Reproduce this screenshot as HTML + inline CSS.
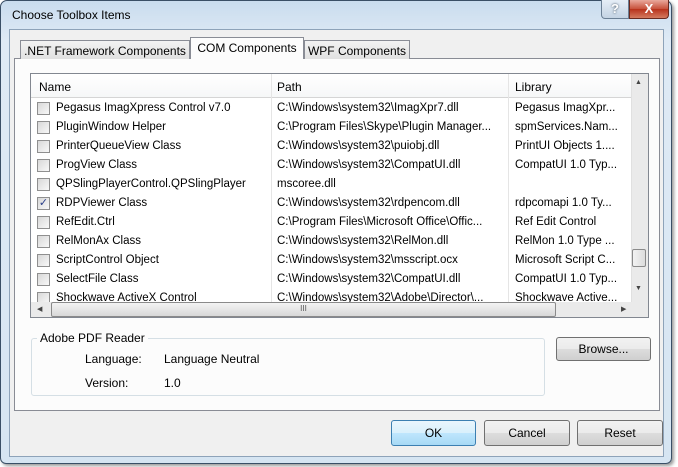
<!DOCTYPE html>
<html><head><style>
*{box-sizing:border-box;margin:0;padding:0}
body{width:678px;height:467px;overflow:hidden;font-family:"Liberation Sans",sans-serif;font-size:11.5px;color:#000;position:relative;background:#fff}
.abs{position:absolute}
#frame{left:0;top:0;width:672px;height:464px;border:1px solid #3a4f66;border-radius:7px 7px 6px 6px;background:linear-gradient(180deg,#c9dcee 0,#dfeaf5 40px,#d6e5f2 100%);box-shadow:2px 2px 3px rgba(0,0,0,.4)}
#client{left:9px;top:29px;width:655px;height:428px;background:#f0f0f0;border:1px solid #8ea3b9}
.btnc{border:1px solid #707070;border-radius:3px;background:linear-gradient(#f2f2f2 0,#ebebeb 50%,#dddddd 51%,#cfcfcf 100%);text-align:center;font-size:12px}
.tab{border:1px solid #898c95;border-bottom:none;background:linear-gradient(#f3f3f3,#e1e1e1);font-size:12px;text-align:center;line-height:17px}
.row{position:absolute;left:0;height:19px;width:598px;line-height:19px;white-space:nowrap}
.row span{position:absolute;overflow:hidden}
.cb{position:absolute;left:6px;top:3px;width:13px;height:13px;border:1px solid #8f8f8f;background:linear-gradient(135deg,#d8d8d8,#f8f8f8)}
</style></head><body>
<div id="frame" class="abs"></div>
<div class="abs" style="left:12px;top:8px;font-size:12px">Choose Toolbox Items</div>
<div class="abs" style="left:601px;top:0;width:28px;height:19px;border:1px solid #6b7f95;border-top:none;border-radius:0 0 0 4px;background:linear-gradient(#e6eef7,#c4d3e3);text-align:center;color:#fff;font-weight:bold;font-size:13px;line-height:17px;text-shadow:0 0 2px #345">?</div>
<div class="abs" style="left:629px;top:0;width:40px;height:19px;border:1px solid #6a2a20;border-top:none;border-radius:0 0 4px 0;background:linear-gradient(#e9a99c,#c7503a 50%,#b8321c 51%,#d47a5f);text-align:center;color:#fff;font-weight:bold;font-size:13px;line-height:17px">X</div>
<div id="client" class="abs"></div>
<div class="abs" style="left:14px;top:58px;width:646px;height:353px;border:1px solid #898c95;background:#fcfcfc"></div>
<div class="abs tab" style="left:20px;top:40px;width:170px;height:19px;line-height:20px">.NET Framework Components</div>
<div class="abs tab" style="left:190px;top:37px;width:114px;height:22px;background:#fcfcfc;line-height:20px">COM Components</div>
<div class="abs tab" style="left:304px;top:40px;width:106px;height:19px;line-height:20px">WPF Components</div>
<div class="abs" style="left:30px;top:73px;width:619px;height:245px;border:1px solid #828790;background:#fff;overflow:hidden">
 <div class="abs" style="left:0;top:0;width:600px;height:24px;background:linear-gradient(#fff,#f6f7f8);border-bottom:1px solid #d5d5d5"></div>
 <div class="abs" style="left:8px;top:6px;font-size:12px">Name</div>
 <div class="abs" style="left:240px;top:0;width:1px;height:228px;background:#e5e5e5"></div>
 <div class="abs" style="left:246px;top:6px;font-size:12px">Path</div>
 <div class="abs" style="left:477px;top:0;width:1px;height:228px;background:#e5e5e5"></div>
 <div class="abs" style="left:484px;top:6px;font-size:12px">Library</div>
 <div class="abs" style="left:0;top:25px;width:600px;height:203px;overflow:hidden">
  <div class="row" style="top:0"><i class="cb"></i><span style="left:25px">Pegasus ImagXpress Control v7.0</span><span style="left:246px">C:\Windows\system32\ImagXpr7.dll</span><span style="left:484px">Pegasus ImagXpr...</span></div>
  <div class="row" style="top:19px"><i class="cb"></i><span style="left:25px">PluginWindow Helper</span><span style="left:246px">C:\Program Files\Skype\Plugin Manager...</span><span style="left:484px">spmServices.Nam...</span></div>
  <div class="row" style="top:38px"><i class="cb"></i><span style="left:25px">PrinterQueueView Class</span><span style="left:246px">C:\Windows\system32\puiobj.dll</span><span style="left:484px">PrintUI Objects 1....</span></div>
  <div class="row" style="top:57px"><i class="cb"></i><span style="left:25px">ProgView Class</span><span style="left:246px">C:\Windows\system32\CompatUI.dll</span><span style="left:484px">CompatUI 1.0 Typ...</span></div>
  <div class="row" style="top:76px"><i class="cb"></i><span style="left:25px">QPSlingPlayerControl.QPSlingPlayer</span><span style="left:246px">mscoree.dll</span></div>
  <div class="row" style="top:95px"><i class="cb" style="font-size:11px;line-height:10px;color:#2a3f8a;text-align:center;font-style:normal">✓</i><span style="left:25px">RDPViewer Class</span><span style="left:246px">C:\Windows\system32\rdpencom.dll</span><span style="left:484px">rdpcomapi 1.0 Ty...</span></div>
  <div class="row" style="top:114px"><i class="cb"></i><span style="left:25px">RefEdit.Ctrl</span><span style="left:246px">C:\Program Files\Microsoft Office\Offic...</span><span style="left:484px">Ref Edit Control</span></div>
  <div class="row" style="top:133px"><i class="cb"></i><span style="left:25px">RelMonAx Class</span><span style="left:246px">C:\Windows\system32\RelMon.dll</span><span style="left:484px">RelMon 1.0 Type ...</span></div>
  <div class="row" style="top:152px"><i class="cb"></i><span style="left:25px">ScriptControl Object</span><span style="left:246px">C:\Windows\system32\msscript.ocx</span><span style="left:484px">Microsoft Script C...</span></div>
  <div class="row" style="top:171px"><i class="cb"></i><span style="left:25px">SelectFile Class</span><span style="left:246px">C:\Windows\system32\CompatUI.dll</span><span style="left:484px">CompatUI 1.0 Typ...</span></div>
  <div class="row" style="top:190px"><i class="cb"></i><span style="left:25px">Shockwave ActiveX Control</span><span style="left:246px">C:\Windows\system32\Adobe\Director\...</span><span style="left:484px">Shockwave Active...</span></div>
 </div>
 <div class="abs" style="left:600px;top:0;width:17px;height:228px;background:#eaeaea;border-left:1px solid #e0e0e0"></div>
 <div class="abs" style="left:604px;top:5px;font-size:7px;color:#444">▲</div>
 <div class="abs" style="left:604px;top:211px;font-size:7px;color:#444">▼</div>
 <div class="abs" style="left:601px;top:175px;width:14px;height:18px;border:1px solid #8a8a8a;border-radius:2px;background:linear-gradient(90deg,#f2f2f2,#dcdcdc)"></div>
 <div class="abs" style="left:0;top:228px;width:617px;height:15px;background:#eaeaea"></div>
 <div class="abs" style="left:6px;top:228px;font-size:7px;color:#444;line-height:15px">◀</div>
 <div class="abs" style="left:590px;top:228px;font-size:7px;color:#444;line-height:15px">▶</div>
 <div class="abs" style="left:20px;top:228px;width:505px;height:15px;border:1px solid #8a8a8a;border-radius:2px;background:linear-gradient(#f3f3f3,#d8d8d8);text-align:center;font-size:8px;line-height:12px;color:#555">III</div>
</div>
<div class="abs" style="left:31px;top:338px;width:514px;height:58px;border:1px solid #d5dfe5;border-radius:3px"></div>
<div class="abs" style="left:37px;top:331px;background:#fcfcfc;padding:0 3px;font-size:12px">Adobe PDF Reader</div>
<div class="abs" style="left:85px;top:352px;font-size:12px">Language:</div>
<div class="abs" style="left:164px;top:352px;font-size:12px">Language Neutral</div>
<div class="abs" style="left:85px;top:376px;font-size:12px">Version:</div>
<div class="abs" style="left:164px;top:376px;font-size:12px">1.0</div>
<div class="abs btnc" style="left:556px;top:337px;width:95px;height:24px;line-height:22px">Browse...</div>
<div class="abs btnc" style="left:391px;top:420px;width:85px;height:26px;line-height:24px;border-color:#3c7fb1;background:linear-gradient(#eaf6fd 0,#d9f0fc 50%,#bee6fd 51%,#a7d9f5 100%)">OK</div>
<div class="abs btnc" style="left:484px;top:420px;width:86px;height:26px;line-height:24px">Cancel</div>
<div class="abs btnc" style="left:577px;top:420px;width:86px;height:26px;line-height:24px">Reset</div>
</body></html>
